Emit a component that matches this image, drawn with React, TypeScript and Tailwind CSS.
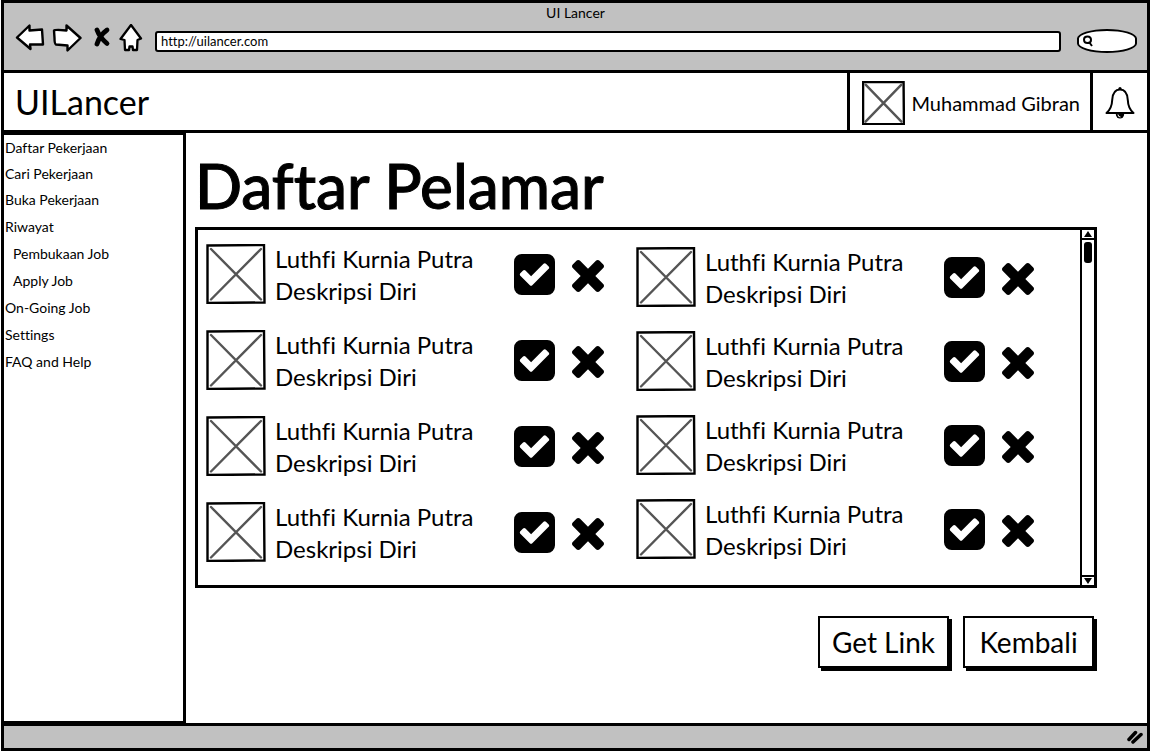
import React from "react";

const CROSS =
  "M1490 1322q0 40-28 68l-136 136q-28 28-68 28t-68-28l-294-294-294 294q-28 28-68 28t-68-28l-136-136q-28-28-28-68t28-68l294-294-294-294q-28-28-28-68t28-68l136-136q28-28 68-28t68 28l294 294 294-294q28-28 68-28t68 28l136 136q28 28 28 68t-28 68l-294 294 294 294q28 28 28 68z";
const CHECK_SQUARE =
  "M685 1171l614-614q19-19 19-45t-19-45l-102-102q-19-19-45-19t-45 19l-467 467-211-211q-19-19-45-19t-45 19l-102 102q-19 19-19 45t19 45l358 358q19 19 45 19t45-19zm851-883v960q0 119-84.5 203.5t-203.5 84.5h-960q-119 0-203.5-84.5t-84.5-203.5v-960q0-119 84.5-203.5t203.5-84.5h960q119 0 203.5 84.5t84.5 203.5z";

function Placeholder({ className }: { className: string }) {
  return (
    <svg viewBox="0 0 60 60" className={className} preserveAspectRatio="none" aria-hidden="true">
      <path d="M1.500 1.500L58 1L58.500 58.500L1.500 59Z" fill="white" stroke="black" strokeWidth="2.4" vectorEffect="non-scaling-stroke" />
      <path d="M5 5L55 55.5M55 5L5 55.5" stroke="#555" strokeWidth="2.4" strokeLinecap="round" vectorEffect="non-scaling-stroke" />
    </svg>
  );
}

function BrowserBar() {
  return (
    <header className="flex h-[70px] flex-col border-b-[3px] border-black bg-[#c1c1c1]">
      <div className="text-center text-[14px] leading-5">UI Lancer</div>
      <div className="flex items-center pr-[10px] pl-[11px]">
        <button aria-label="Back" className="mr-[7px] h-7 w-[30px]">
          <svg viewBox="0 0 30 28" className="size-full" fill="white" stroke="black" strokeWidth="2.4" strokeLinejoin="round">
            <path d="M2 13.5L14.500 1.500L14.500 6.500L27 5.500L28 20.500L15 20.500L15.500 25Z" />
          </svg>
        </button>
        <button aria-label="Forward" className="mr-[11px] h-7 w-[30px]">
          <svg viewBox="0 0 30 28" className="size-full" fill="white" stroke="black" strokeWidth="2.4" strokeLinejoin="round">
            <path d="M2 6.500Q3 5.500 14.500 6.500L14.500 1.500L28.500 14L15.500 26.500L15.500 21.500L4 20.500Q2.500 20 2.500 14Z" />
          </svg>
        </button>
        <button aria-label="Stop" className="mr-2 h-7 w-[18px]">
          <svg viewBox="0 0 18 28" className="size-full" fill="none" stroke="black" strokeWidth="4.800" strokeLinecap="round">
            <path d="M4 6Q6.500 13 14 19.500M14 6Q7 11 4 20" />
          </svg>
        </button>
        <button aria-label="Home" className="mr-3 h-7 w-6">
          <svg viewBox="0 0 24 28" className="size-full" fill="white" stroke="black" strokeWidth="2.300" strokeLinejoin="round">
            <path d="M12 1L22 14.500L18.500 16L18 26L14 26L13.500 22.500L10.500 22.500L10 26L6 26L5.500 16L1.500 15Z" />
          </svg>
        </button>
        <input
          aria-label="Address"
          defaultValue="http://uilancer.com"
          className="mt-[6px] h-[21px] min-w-0 flex-1 rounded-[3px] border-2 border-black bg-white px-1 text-[13px] outline-none"
        />
        <label className="mt-[6px] ml-4 flex h-6 w-[60px] items-center rounded-[50%/40%] border-2 border-black bg-white pl-[3px]">
          <svg viewBox="0 0 12 12" className="size-3 shrink-0" fill="none" stroke="black" strokeWidth="2">
            <path d="M2 4.500Q2 1.500 5.500 1.500T9 5Q9 8 5.500 8T2 4.500M7 7L10 11" />
          </svg>
          <input aria-label="Search" className="w-full min-w-0 bg-transparent text-[12px] outline-none" />
        </label>
      </div>
    </header>
  );
}

function TopBar() {
  return (
    <div className="flex h-[60px] items-stretch border-b-[3px] border-black bg-white">
      <div className="flex flex-1 items-center pl-[11px] text-[34px] leading-10">UILancer</div>
      <div className="flex items-center gap-[6px] border-l-[3px] border-black pt-[3px] pr-[10px] pl-3">
        <Placeholder className="h-11 w-[43px]" />
        <span className="text-[20px]">Muhammad Gibran</span>
      </div>
      <button aria-label="Notifications" className="flex w-[57px] items-center justify-center border-l-[3px] border-black pt-[3px]">
        <svg viewBox="0 0 30 34" className="h-[34px] w-[30px]" fill="none" stroke="black" strokeWidth="2" strokeLinejoin="round">
          <path d="M15 3.500C9 3.500 7.500 8.500 7.200 14C7 20 5 24 1.500 27H28.500C25 24 23 20 22.800 14C22.500 8.500 21 3.500 15 3.500Z" />
          <circle cx="15" cy="2.500" r="1.600" fill="black" stroke="none" />
          <path d="M10.800 28A4.200 4.500 0 0 0 19.200 28Z" fill="black" stroke="none" />
          <path d="M13 28.500Q13 31 15.500 31" stroke="white" strokeWidth="1" />
        </svg>
      </button>
    </div>
  );
}

const MAIN_LINKS = ["Daftar Pekerjaan", "Cari Pekerjaan", "Buka Pekerjaan"];
const MORE_LINKS = [
  { label: "Riwayat", nested: false },
  { label: "Pembukaan Job", nested: true },
  { label: "Apply Job", nested: true },
  { label: "On-Going Job", nested: false },
  { label: "Settings", nested: false },
  { label: "FAQ and Help", nested: false },
];

function Sidebar() {
  return (
    <nav className="w-[182px] shrink-0 border-t-2 border-r-[3px] border-b-2 border-black pl-px text-[14px]">
      {MAIN_LINKS.map((label) => (
        <a key={label} href="#" className="block h-[26px] leading-[26px]">{label}</a>
      ))}
      {MORE_LINKS.map(({ label, nested }) => (
        <a key={label} href="#" className={nested ? "block h-[27px] pl-2 leading-[27px]" : "block h-[27px] leading-[27px]"}>
          {label}
        </a>
      ))}
    </nav>
  );
}

function Applicant() {
  return (
    <li className="flex h-[60px] items-center">
      <Placeholder className="mr-[9px] h-[60px] w-[60px] shrink-0" />
      <div className="w-[239px] pt-[2px] text-[24px] leading-8">
        <div>Luthfi Kurnia Putra</div>
        <div>Deskripsi Diri</div>
      </div>
      <button aria-label="Accept" className="mr-[17px]">
        <svg viewBox="0 0 1536 1536" className="size-[41px]"><path d={CHECK_SQUARE} /></svg>
      </button>
      <button aria-label="Reject" className="mt-1">
        <svg viewBox="302 366 1188 1188" className="size-8"><path d={CROSS} /></svg>
      </button>
    </li>
  );
}

function ApplicantList() {
  return (
    <div className="flex h-[361px] border-[3px] border-black">
      <div className="flex flex-1 gap-8 pl-2">
        <ul className="flex flex-col gap-[26px] pt-[14px]">
          {[0, 1, 2, 3].map((i) => <Applicant key={i} />)}
        </ul>
        <ul className="flex flex-col gap-6 pt-[17px]">
          {[0, 1, 2, 3].map((i) => <Applicant key={i} />)}
        </ul>
      </div>
      <div className="flex w-[14px] flex-col border-l-2 border-black">
        <button aria-label="Scroll up" className="flex h-[10px] items-center justify-center border-b-2 border-black">
          <svg viewBox="0 0 8 6" className="h-[6px] w-2"><path d="M4 0L8 6H0Z" /></svg>
        </button>
        <div className="flex-1 px-[2px] pt-[2px]">
          <div className="h-[21px] rounded-[3px] bg-black" />
        </div>
        <button aria-label="Scroll down" className="flex h-[10px] items-center justify-center border-t-2 border-black">
          <svg viewBox="0 0 8 6" className="h-[6px] w-2"><path d="M0 0H8L4 6Z" /></svg>
        </button>
      </div>
    </div>
  );
}

function ActionButton({ children }: { children: React.ReactNode }) {
  return (
    <button className="h-[52px] w-[131px] border-2 border-black bg-white text-[28px] leading-8 shadow-[3px_3px_0_#000]">
      {children}
    </button>
  );
}

export default function App() {
  return (
    <div className="flex min-h-screen flex-col bg-white px-px pb-px font-['Lato',sans-serif] text-black [font-variant-ligatures:none]">
      <div className="flex flex-1 flex-col border-[3px] border-black">
        <BrowserBar />
        <TopBar />
        <div className="flex flex-1">
          <Sidebar />
          <main className="flex-1 pt-[14px] pr-[50px] pl-[9px]">
            <h1 className="mb-1 text-[62px] leading-[76px] font-medium [-webkit-text-stroke:1px_black]">Daftar Pelamar</h1>
            <ApplicantList />
            <div className="mt-7 flex justify-end gap-[14px] pr-[3px]">
              <ActionButton>Get Link</ActionButton>
              <ActionButton>Kembali</ActionButton>
            </div>
          </main>
        </div>
        <footer className="flex h-[25px] items-center justify-end border-t-[3px] border-black bg-[#c1c1c1] pr-1">
          <svg viewBox="0 0 16 14" className="h-[14px] w-4" fill="none" stroke="black" strokeWidth="3.500" strokeLinecap="round">
            <path d="M2 9.500L8.500 2.500M6 12L14 4.500" />
          </svg>
        </footer>
      </div>
    </div>
  );
}
